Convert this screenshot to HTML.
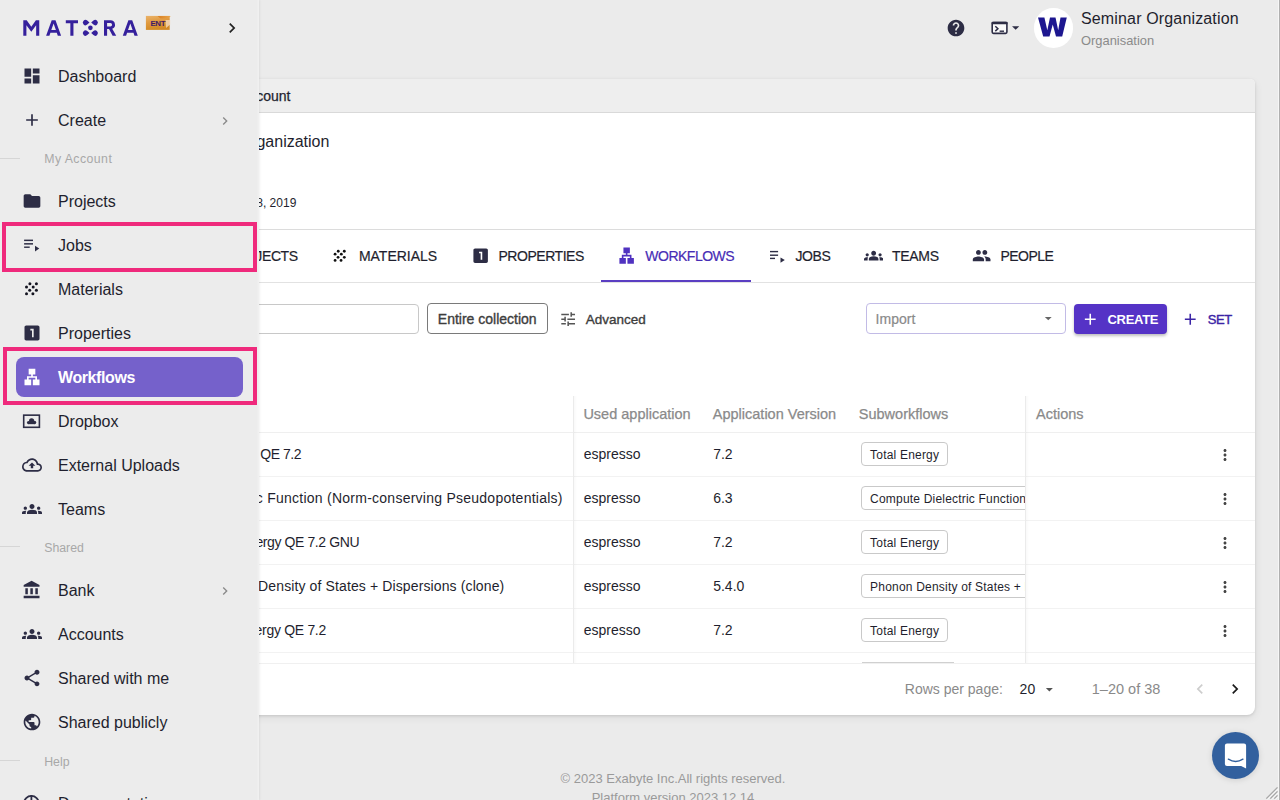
<!DOCTYPE html>
<html><head><meta charset="utf-8"><style>
html,body{margin:0;padding:0;}
body{width:1280px;height:800px;overflow:hidden;position:relative;background:#ebebeb;font-family:"Liberation Sans", sans-serif;-webkit-font-smoothing:antialiased;}
.t{position:absolute;line-height:1;white-space:nowrap;font-family:"Liberation Sans", sans-serif;}
svg{display:block;}
</style></head><body>
<div style="position:absolute;left:1278px;top:0px;width:1px;height:800px;background:#f6f6f6;"></div>
<div style="position:absolute;left:1279px;top:0px;width:1px;height:800px;background:#b0b0b0;"></div>
<svg style="position:absolute;left:945.50px;top:17.75px;" width="20" height="20" viewBox="0 0 24 24"><path fill="#2d2d45" d="M12 2C6.48 2 2 6.48 2 12s4.48 10 10 10 10-4.48 10-10S17.52 2 12 2zm1 17h-2v-2h2v2zm2.07-7.75l-.9.92C13.45 12.9 13 13.5 13 15h-2v-.5c0-1.1.45-2.1 1.17-2.83l1.24-1.26c.37-.36.59-.86.59-1.41 0-1.1-.9-2-2-2s-2 .9-2 2H8c0-2.21 1.79-4 4-4s4 1.79 4 4c0 .88-.36 1.68-.93 2.25z"/></svg>
<svg style="position:absolute;left:0;top:0;" width="1280" height="800" viewBox="0 0 1280 800"><rect x="992.2" y="22.5" width="14.7" height="10.9" rx="1.3" fill="#fafafa" stroke="#2d2d45" stroke-width="1.6"/><rect x="991.5" y="21.7" width="16.2" height="2.6" rx="1" fill="#2d2d45"/><path d="M995.3 26.3L997.9 28.7L995.3 31.1" fill="none" stroke="#2d2d45" stroke-width="1.5"/><rect x="999.6" y="30.5" width="4.4" height="1.4" fill="#2d2d45"/></svg>
<svg style="position:absolute;left:1006.50px;top:19.05px;" width="17.3" height="17.3" viewBox="0 0 24 24"><path fill="#2d2d45" d="M7 10l5 5 5-5z"/></svg>
<div style="position:absolute;left:1033.7px;top:8.4px;width:39.4px;height:39.4px;border-radius:50%;background:#fff;"></div>
<svg style="position:absolute;left:0;top:0;" width="1280" height="800" viewBox="0 0 1280 800"><path d="M1038 17.4H1044.4L1047.3 30.2L1050 17.4H1055.5L1058.2 30.2L1060.5 17.4H1066.8L1062.2 36.5H1056L1052.75 24.6L1049.5 36.5H1043.2Z" fill="#1d1790"/></svg>
<div class="t" style="left:1081.00px;top:11.00px;font-size:16px;color:#1f1f2e;font-weight:400;letter-spacing:0.15px;">Seminar Organization</div>
<div class="t" style="left:1081.00px;top:35.00px;font-size:12.9px;color:#8a8a8a;font-weight:400;">Organisation</div>
<div style="position:absolute;left:90px;top:79px;width:1165px;height:636px;background:#fff;border-radius:5px 5px 8px 8px;box-shadow:0 1px 3px rgba(0,0,0,0.12),1px 3px 8px rgba(0,0,0,0.06);overflow:hidden;">
<div style="position:absolute;left:0;top:0;width:100%;height:33px;background:#eeeeee;border-bottom:1px solid #d9d9d9;"></div>
</div>
<div class="t" style="right:989.50px;top:89.00px;font-size:14px;color:#1f1f2e;font-weight:400;-webkit-text-stroke:0.25px #1f1f2e;">My Account</div>
<div class="t" style="right:950.60px;top:134.00px;font-size:16px;color:#1f1f2e;font-weight:400;">Seminar Organization</div>
<div class="t" style="right:983.70px;top:197.00px;font-size:12px;color:#1f1f2e;font-weight:400;">Created: Feb 28, 2019</div>
<div style="position:absolute;left:90px;top:229px;width:1165px;height:1px;background:#dcdcdc;"></div>
<div style="position:absolute;left:90px;top:282px;width:1165px;height:1px;background:#e2e2e2;"></div>
<div class="t" style="right:982.30px;top:249.00px;font-size:14px;color:#1f1f2e;font-weight:400;letter-spacing:-0.4px;-webkit-text-stroke:0.2px;">PROJECTS</div>
<svg style="position:absolute;left:0;top:0;" width="1280" height="800" viewBox="0 0 1280 800"><circle cx="338.26" cy="251.25" r="1.40" fill="#111"/><circle cx="344.30" cy="251.25" r="1.40" fill="#111"/><circle cx="335.10" cy="254.22" r="1.40" fill="#111"/><circle cx="341.33" cy="254.22" r="1.40" fill="#111"/><circle cx="338.07" cy="257.29" r="1.40" fill="#111"/><circle cx="344.30" cy="257.29" r="1.40" fill="#111"/><circle cx="335.10" cy="260.45" r="1.40" fill="#111"/><circle cx="341.05" cy="260.45" r="1.40" fill="#111"/></svg>
<div class="t" style="left:358.90px;top:249.00px;font-size:14px;color:#1f1f2e;font-weight:400;letter-spacing:0px;-webkit-text-stroke:0.2px;">MATERIALS</div>
<svg style="position:absolute;left:470.60px;top:246.10px;" width="19.3" height="19.3" viewBox="0 0 24 24"><path fill="#2d2d45" d="M19 3H5c-1.1 0-2 .9-2 2v14c0 1.1.9 2 2 2h14c1.1 0 2-.9 2-2V5c0-1.1-.9-2-2-2zm-5 14h-2V9h-2V7h4v10z"/></svg>
<div class="t" style="left:498.40px;top:249.00px;font-size:14px;color:#1f1f2e;font-weight:400;letter-spacing:-0.45px;-webkit-text-stroke:0.2px;">PROPERTIES</div>
<svg style="position:absolute;left:617.40px;top:246.30px;" width="19.3" height="19.3" viewBox="0 0 24 24"><path fill="#5032c0" d="M13 22h8v-7h-3v-4h-5V9h3V2H8v7h3v2H6v4H3v7h8v-7H8v-2h8v2h-3z"/></svg>
<div class="t" style="left:645.30px;top:249.00px;font-size:14px;color:#472db5;font-weight:400;letter-spacing:-0.5px;-webkit-text-stroke:0.2px;">WORKFLOWS</div>
<div style="position:absolute;left:601px;top:280px;width:150px;height:2px;background:#5a3ec2;"></div>
<svg style="position:absolute;left:0;top:0;" width="1280" height="800" viewBox="0 0 1280 800"><g fill="#2d2d45"><rect x="770" y="250.9" width="8.1" height="1.4"/><rect x="770" y="254.5" width="8.1" height="1.4"/><rect x="770" y="257.7" width="5" height="1.4"/><path d="M780.5 257.4v5.3l4.3-2.65z"/></g></svg>
<div class="t" style="left:795.50px;top:249.00px;font-size:14px;color:#1f1f2e;font-weight:400;letter-spacing:-0.4px;-webkit-text-stroke:0.2px;">JOBS</div>
<svg style="position:absolute;left:863.70px;top:246.20px;" width="19.3" height="19.3" viewBox="0 0 24 24"><path fill="#2d2d45" d="M12 12.75c1.63 0 3.07.39 4.24.9 1.08.48 1.76 1.56 1.76 2.73V18H6v-1.61c0-1.18.68-2.26 1.76-2.73 1.17-.52 2.61-.91 4.24-.91zM4 13c1.1 0 2-.9 2-2s-.9-2-2-2-2 .9-2 2 .9 2 2 2zm1.13 1.1c-.37-.06-.74-.1-1.13-.1-.99 0-1.93.21-2.78.58C.48 14.9 0 15.62 0 16.43V18h4.5v-1.61c0-.83.23-1.61.63-2.29zM20 13c1.1 0 2-.9 2-2s-.9-2-2-2-2 .9-2 2 .9 2 2 2zm4 3.43c0-.81-.48-1.53-1.22-1.85-.85-.37-1.79-.58-2.78-.58-.39 0-.76.04-1.13.1.4.68.63 1.46.63 2.29V18H24v-1.57zM12 6c1.66 0 3 1.34 3 3s-1.34 3-3 3-3-1.34-3-3 1.34-3 3-3z"/></svg>
<div class="t" style="left:892.00px;top:249.00px;font-size:14px;color:#1f1f2e;font-weight:400;letter-spacing:-0.3px;-webkit-text-stroke:0.2px;">TEAMS</div>
<svg style="position:absolute;left:972.00px;top:246.20px;" width="19.3" height="19.3" viewBox="0 0 24 24"><path fill="#2d2d45" d="M16 11c1.66 0 2.99-1.34 2.99-3S17.66 5 16 5c-1.66 0-3 1.34-3 3s1.34 3 3 3zm-8 0c1.66 0 2.99-1.34 2.99-3S9.66 5 8 5C6.34 5 5 6.34 5 8s1.34 3 3 3zm0 2c-2.33 0-7 1.17-7 3.5V19h14v-2.5c0-2.33-4.67-3.5-7-3.5zm8 0c-.29 0-.62.02-.97.05 1.16.84 1.97 1.97 1.97 3.45V19h6v-2.5c0-2.33-4.67-3.5-7-3.5z"/></svg>
<div class="t" style="left:1000.50px;top:249.00px;font-size:14px;color:#1f1f2e;font-weight:400;letter-spacing:-0.55px;-webkit-text-stroke:0.2px;">PEOPLE</div>
<div style="position:absolute;left:150px;top:304.4px;width:268.6px;height:29.6px;box-sizing:border-box;border:1px solid #c8c8c8;border-radius:4px;background:#fff;"></div>
<div style="position:absolute;left:427.1px;top:303.4px;width:121px;height:31px;box-sizing:border-box;border:1px solid #7a7a7a;border-radius:4px;"></div>
<div class="t" style="left:437.80px;top:312.00px;font-size:14px;color:#3d3d3d;font-weight:400;-webkit-text-stroke:0.35px #3d3d3d;">Entire collection</div>
<svg style="position:absolute;left:558.70px;top:309.80px;" width="18.3" height="18.3" viewBox="0 0 24 24"><path fill="#555" d="M3 17v2h6v-2H3zM3 5v2h10V5H3zm10 16v-2h8v-2h-8v-2h-2v6h2zM7 9v2H3v2h4v2h2V9H7zm14 4v-2H11v2h10zm-6-4h2V7h4V5h-4V3h-2v6z"/></svg>
<div class="t" style="left:585.70px;top:313.00px;font-size:13.5px;color:#3d3d3d;font-weight:400;-webkit-text-stroke:0.35px #3d3d3d;">Advanced</div>
<div style="position:absolute;left:865.5px;top:303.4px;width:200.2px;height:31px;box-sizing:border-box;border:1.3px solid #c2bbe6;border-radius:4px;"></div>
<div class="t" style="left:875.60px;top:312.00px;font-size:14px;color:#8a8a8a;font-weight:400;-webkit-text-stroke:0.2px;">Import</div>
<svg style="position:absolute;left:1040.10px;top:310.40px;" width="16.5" height="16.5" viewBox="0 0 24 24"><path fill="#666" d="M7 10l5 5 5-5z"/></svg>
<div style="position:absolute;left:1074px;top:304px;width:93px;height:29.5px;background:#5533c6;border-radius:4px;box-shadow:0 2px 3px rgba(0,0,0,0.25);"></div>
<svg style="position:absolute;left:1081.00px;top:310.20px;" width="18.5" height="18.5" viewBox="0 0 24 24"><path fill="#fff" d="M19 13h-6v6h-2v-6H5v-2h6V5h2v6h6v2z"/></svg>
<div class="t" style="left:1107.50px;top:313.00px;font-size:13px;color:#fff;font-weight:700;letter-spacing:-0.3px;">CREATE</div>
<svg style="position:absolute;left:1181.20px;top:309.90px;" width="18.5" height="18.5" viewBox="0 0 24 24"><path fill="#3b24a6" d="M19 13h-6v6h-2v-6H5v-2h6V5h2v6h6v2z"/></svg>
<div class="t" style="left:1207.80px;top:313.00px;font-size:13px;color:#3b24a6;font-weight:400;letter-spacing:-0.45px;-webkit-text-stroke:0.4px #3b24a6;">SET</div>
<div class="t" style="left:583.40px;top:407.00px;font-size:14.5px;color:#8a8a8a;font-weight:400;-webkit-text-stroke:0.25px;">Used application</div>
<div class="t" style="left:712.80px;top:407.00px;font-size:14.5px;color:#8a8a8a;font-weight:400;-webkit-text-stroke:0.25px;">Application Version</div>
<div class="t" style="left:858.80px;top:407.00px;font-size:14.5px;color:#8a8a8a;font-weight:400;-webkit-text-stroke:0.25px;">Subworkflows</div>
<div class="t" style="left:1036.00px;top:407.00px;font-size:14.5px;color:#8a8a8a;font-weight:400;-webkit-text-stroke:0.25px;">Actions</div>
<div style="position:absolute;left:90px;top:432px;width:1165px;height:1px;background:#efefef;"></div>
<div class="t" style="right:978.85px;top:447.00px;font-size:14px;color:#1f1f2e;font-weight:400;letter-spacing:-0.45px;">Band Gap HSE QE 7.2</div>
<div class="t" style="left:583.70px;top:447.00px;font-size:14px;color:#1f1f2e;font-weight:400;">espresso</div>
<div class="t" style="left:713.20px;top:447.00px;font-size:14px;color:#1f1f2e;font-weight:400;">7.2</div>
<div style="position:absolute;left:861.1px;top:442.3px;height:23.8px;box-sizing:border-box;border:1px solid #c9c9c9;border-radius:4px;padding:0 8px;"><div class="t" style="position:static;font-size:12px;line-height:21.8px;padding-top:2px;height:19.8px;letter-spacing:0.2px;color:#1f1f2e;">Total Energy</div></div>
<div style="position:absolute;left:90px;top:476px;width:1165px;height:1px;background:#f2f2f2;"></div>
<div class="t" style="right:717.25px;top:491.00px;font-size:14px;color:#1f1f2e;font-weight:400;letter-spacing:0.25px;">Compute Dielectric Function (Norm-conserving Pseudopotentials)</div>
<div class="t" style="left:583.70px;top:491.00px;font-size:14px;color:#1f1f2e;font-weight:400;">espresso</div>
<div class="t" style="left:713.20px;top:491.00px;font-size:14px;color:#1f1f2e;font-weight:400;">6.3</div>
<div style="position:absolute;left:861.1px;top:486.3px;height:23.8px;box-sizing:border-box;border:1px solid #c9c9c9;border-radius:4px;padding:0 8px;"><div class="t" style="position:static;font-size:12px;line-height:21.8px;padding-top:2px;height:19.8px;letter-spacing:0.2px;color:#1f1f2e;">Compute Dielectric Function</div></div>
<div style="position:absolute;left:90px;top:520px;width:1165px;height:1px;background:#f2f2f2;"></div>
<div class="t" style="right:920.90px;top:535.00px;font-size:14px;color:#1f1f2e;font-weight:400;letter-spacing:-0.4px;">Total Energy QE 7.2 GNU</div>
<div class="t" style="left:583.70px;top:535.00px;font-size:14px;color:#1f1f2e;font-weight:400;">espresso</div>
<div class="t" style="left:713.20px;top:535.00px;font-size:14px;color:#1f1f2e;font-weight:400;">7.2</div>
<div style="position:absolute;left:861.1px;top:530.3px;height:23.8px;box-sizing:border-box;border:1px solid #c9c9c9;border-radius:4px;padding:0 8px;"><div class="t" style="position:static;font-size:12px;line-height:21.8px;padding-top:2px;height:19.8px;letter-spacing:0.2px;color:#1f1f2e;">Total Energy</div></div>
<div style="position:absolute;left:90px;top:564px;width:1165px;height:1px;background:#f2f2f2;"></div>
<div class="t" style="right:775.63px;top:579.00px;font-size:14px;color:#1f1f2e;font-weight:400;letter-spacing:0.12px;">Phonon Density of States + Dispersions (clone)</div>
<div class="t" style="left:583.70px;top:579.00px;font-size:14px;color:#1f1f2e;font-weight:400;">espresso</div>
<div class="t" style="left:713.20px;top:579.00px;font-size:14px;color:#1f1f2e;font-weight:400;">5.4.0</div>
<div style="position:absolute;left:861.1px;top:574.3px;height:23.8px;box-sizing:border-box;border:1px solid #c9c9c9;border-radius:4px;padding:0 8px;"><div class="t" style="position:static;font-size:12px;line-height:21.8px;padding-top:2px;height:19.8px;letter-spacing:0.2px;color:#1f1f2e;">Phonon Density of States + Dispersions</div></div>
<div style="position:absolute;left:90px;top:608px;width:1165px;height:1px;background:#f2f2f2;"></div>
<div class="t" style="right:954.05px;top:623.00px;font-size:14px;color:#1f1f2e;font-weight:400;letter-spacing:-0.3px;">Total Energy QE 7.2</div>
<div class="t" style="left:583.70px;top:623.00px;font-size:14px;color:#1f1f2e;font-weight:400;">espresso</div>
<div class="t" style="left:713.20px;top:623.00px;font-size:14px;color:#1f1f2e;font-weight:400;">7.2</div>
<div style="position:absolute;left:861.1px;top:618.3px;height:23.8px;box-sizing:border-box;border:1px solid #c9c9c9;border-radius:4px;padding:0 8px;"><div class="t" style="position:static;font-size:12px;line-height:21.8px;padding-top:2px;height:19.8px;letter-spacing:0.2px;color:#1f1f2e;">Total Energy</div></div>
<div style="position:absolute;left:90px;top:652px;width:1165px;height:1px;background:#f2f2f2;"></div>
<div style="position:absolute;left:861.5px;top:662px;width:92px;height:1px;background:#d0d0d0;"></div>
<div style="position:absolute;left:1026px;top:433px;width:150px;height:230px;background:#fff;"></div>
<svg style="position:absolute;left:1215.50px;top:445.50px;" width="18" height="18" viewBox="0 0 24 24"><path fill="#444" d="M12 8c1.1 0 2-.9 2-2s-.9-2-2-2-2 .9-2 2 .9 2 2 2zm0 2c-1.1 0-2 .9-2 2s.9 2 2 2 2-.9 2-2-.9-2-2-2zm0 6c-1.1 0-2 .9-2 2s.9 2 2 2 2-.9 2-2-.9-2-2-2z"/></svg>
<div style="position:absolute;left:1026px;top:476px;width:229px;height:1px;background:#f2f2f2;"></div>
<svg style="position:absolute;left:1215.50px;top:489.50px;" width="18" height="18" viewBox="0 0 24 24"><path fill="#444" d="M12 8c1.1 0 2-.9 2-2s-.9-2-2-2-2 .9-2 2 .9 2 2 2zm0 2c-1.1 0-2 .9-2 2s.9 2 2 2 2-.9 2-2-.9-2-2-2zm0 6c-1.1 0-2 .9-2 2s.9 2 2 2 2-.9 2-2-.9-2-2-2z"/></svg>
<div style="position:absolute;left:1026px;top:520px;width:229px;height:1px;background:#f2f2f2;"></div>
<svg style="position:absolute;left:1215.50px;top:533.50px;" width="18" height="18" viewBox="0 0 24 24"><path fill="#444" d="M12 8c1.1 0 2-.9 2-2s-.9-2-2-2-2 .9-2 2 .9 2 2 2zm0 2c-1.1 0-2 .9-2 2s.9 2 2 2 2-.9 2-2-.9-2-2-2zm0 6c-1.1 0-2 .9-2 2s.9 2 2 2 2-.9 2-2-.9-2-2-2z"/></svg>
<div style="position:absolute;left:1026px;top:564px;width:229px;height:1px;background:#f2f2f2;"></div>
<svg style="position:absolute;left:1215.50px;top:577.50px;" width="18" height="18" viewBox="0 0 24 24"><path fill="#444" d="M12 8c1.1 0 2-.9 2-2s-.9-2-2-2-2 .9-2 2 .9 2 2 2zm0 2c-1.1 0-2 .9-2 2s.9 2 2 2 2-.9 2-2-.9-2-2-2zm0 6c-1.1 0-2 .9-2 2s.9 2 2 2 2-.9 2-2-.9-2-2-2z"/></svg>
<div style="position:absolute;left:1026px;top:608px;width:229px;height:1px;background:#f2f2f2;"></div>
<svg style="position:absolute;left:1215.50px;top:621.50px;" width="18" height="18" viewBox="0 0 24 24"><path fill="#444" d="M12 8c1.1 0 2-.9 2-2s-.9-2-2-2-2 .9-2 2 .9 2 2 2zm0 2c-1.1 0-2 .9-2 2s.9 2 2 2 2-.9 2-2-.9-2-2-2zm0 6c-1.1 0-2 .9-2 2s.9 2 2 2 2-.9 2-2-.9-2-2-2z"/></svg>
<div style="position:absolute;left:1026px;top:652px;width:229px;height:1px;background:#f2f2f2;"></div>
<div style="position:absolute;left:573px;top:395.5px;width:1px;height:268px;background:#ebebeb;"></div>
<div style="position:absolute;left:574px;top:395.5px;width:3px;height:268px;background:linear-gradient(to right, rgba(0,0,0,0.025), rgba(0,0,0,0));"></div>
<div style="position:absolute;left:1024.5px;top:395.5px;width:1px;height:268px;background:#ebebeb;"></div>
<div style="position:absolute;left:1025.5px;top:395.5px;width:3px;height:268px;background:linear-gradient(to right, rgba(0,0,0,0.025), rgba(0,0,0,0));"></div>
<div style="position:absolute;left:90px;top:663px;width:1165px;height:1px;background:#f0f0f0;"></div>
<div class="t" style="left:904.80px;top:682.00px;font-size:14px;color:#8a8a8a;font-weight:400;">Rows per page:</div>
<div class="t" style="left:1019.60px;top:682.00px;font-size:14px;color:#1f1f2e;font-weight:400;">20</div>
<svg style="position:absolute;left:1040.60px;top:680.90px;" width="16.8" height="16.8" viewBox="0 0 24 24"><path fill="#555" d="M7 10l5 5 5-5z"/></svg>
<div class="t" style="left:1091.80px;top:682.00px;font-size:14.5px;color:#8a8a8a;font-weight:400;">1–20 of 38</div>
<svg style="position:absolute;left:1189.80px;top:679.40px;" width="20" height="20" viewBox="0 0 24 24"><path fill="#cdcdcd" d="M15.41 7.41L14 6l-6 6 6 6 1.41-1.41L10.83 12z"/></svg>
<svg style="position:absolute;left:1225.30px;top:679.40px;" width="20" height="20" viewBox="0 0 24 24"><path fill="#1a1a1a" d="M10 6L8.59 7.41 13.17 12l-4.58 4.59L10 18l6-6z"/></svg>
<div class="t" style="left:473px;width:400px;text-align:center;top:772.00px;font-size:13px;color:#9a9a9a;">© 2023 Exabyte Inc.All rights reserved.</div>
<div class="t" style="left:473px;width:400px;text-align:center;top:790.50px;font-size:13px;color:#9a9a9a;">Platform version 2023.12.14</div>
<div style="position:absolute;left:1212px;top:732px;width:47px;height:47px;border-radius:50%;background:#32609e;box-shadow:0 1px 6px rgba(0,0,0,0.12);"></div>
<svg style="position:absolute;left:0;top:0;" width="1280" height="800" viewBox="0 0 1280 800"><path d="M1227 743.4h17a2.1 2.1 0 0 1 2.1 2.1v23l-5-2.5h-14.1a2.1 2.1 0 0 1-2.1-2.1v-18.4a2.1 2.1 0 0 1 2.1-2.1z" fill="#fff"/><path d="M1228.4 759.2q7.25 4.6 14.5 0" stroke="#32609e" stroke-width="1.4" fill="none" stroke-linecap="round"/></svg>
<svg style="position:absolute;left:0;top:0;" width="1280" height="800" viewBox="0 0 1280 800"><path d="M1267.3 799.6L1278.3 788.6M1271.3 799.6L1278.3 792.6M1275.3 799.6L1278.3 796.6" stroke="#fafafa" stroke-width="1"/><path d="M1266.3 798.6L1277.5 787.4M1270.3 798.6L1277.5 791.4M1274.3 798.6L1277.5 795.4" stroke="#a6a6a6" stroke-width="1.3"/></svg>
<div style="position:absolute;left:0;top:0;width:259.3px;height:800px;background:#ececec;box-shadow:inset -1.5px 0 0 #f0f0f0, 1px 0 2px rgba(0,0,0,0.06);"></div>
<svg style="position:absolute;left:0;top:0;" width="1280" height="800" viewBox="0 0 1280 800"><g fill="#35209c" fill-rule="evenodd">
<path d="M23.3 35.75V20.3H26.7L31.3 26.7L35.9 20.3H39.25V35.75H36.15V25.3L31.3 31.8L26.4 25.3V35.75Z"/>
<path d="M46.1 35.75L51.7 20.3H55.5L61.1 35.75H57.8L56.8 32.8H50.4L49.4 35.75ZM51.3 30.1H55.9L53.6 23.6Z"/>
<path d="M65.8 20.3H78V23.2H73.45V35.75H70.35V23.2H65.8Z"/>
<path d="M104 35.75V20.3H110.6A4.4 4.4 0 0 1 112.2 28.8L116.2 35.75H112.6L109 29.1H107.1V35.75ZM107.1 23.1V26.4H110.4A1.65 1.65 0 0 0 110.4 23.1Z"/>
<path d="M122.8 35.75L128.4 20.3H132.2L137.8 35.75H134.5L133.5 32.8H127.1L126.1 35.75ZM128 30.1H132.6L130.3 23.6Z"/>
</g>
<g fill="#35209c">
<circle cx="90.4" cy="27.85" r="2.3"/>
<path d="M89.50 22.60L87.26 20.61A2.65 2.65 0 1 0 87.26 24.59ZM91.20 22.60L93.44 20.61A2.65 2.65 0 1 1 93.44 24.59ZM89.50 33.10L87.26 31.11A2.65 2.65 0 1 0 87.26 35.09ZM91.20 33.10L93.44 31.11A2.65 2.65 0 1 1 93.44 35.09Z"/>
</g>
<defs><linearGradient id="ent" x1="0" y1="0" x2="0.3" y2="1"><stop offset="0" stop-color="#eab36a"/><stop offset="0.5" stop-color="#e0993e"/><stop offset="1" stop-color="#d28a25"/></linearGradient>
<linearGradient id="ent2" x1="0" y1="0" x2="1" y2="0"><stop offset="0" stop-color="#d97f22"/><stop offset="1" stop-color="#e9a54a"/></linearGradient></defs>
<rect x="145.9" y="15.9" width="23.8" height="14" fill="url(#ent)"/>
<path d="M157.5 15.9H170.8L167.5 18.5H160.5Z" fill="url(#ent2)"/>
<path d="M165.5 20H170.2V24.5L166 28Z" fill="#f3dcc0" opacity="0.8"/>
<text x="150.4" y="25.7" font-family="Liberation Sans" font-weight="700" font-size="7.9" fill="#3f1a66" letter-spacing="-0.35">ENT</text></svg>
<svg style="position:absolute;left:222.30px;top:18.00px;" width="20" height="20" viewBox="0 0 24 24"><path fill="#222" d="M10 6L8.59 7.41 13.17 12l-4.58 4.59L10 18l6-6z"/></svg>
<div style="position:absolute;left:15.7px;top:357px;width:227.3px;height:39.5px;background:#7561cb;border-radius:8px;"></div>
<div class="t" style="left:58.00px;top:69.00px;font-size:16px;color:#1f1f2e;font-weight:400;">Dashboard</div>
<svg style="position:absolute;left:21.50px;top:66.10px;" width="20" height="20" viewBox="0 0 24 24"><path fill="#2d2d45" d="M3 13h8V3H3v10zm0 8h8v-6H3v6zm10 0h8V11h-8v10zm0-18v6h8V3h-8z"/></svg>
<div class="t" style="left:58.00px;top:113.00px;font-size:16px;color:#1f1f2e;font-weight:400;">Create</div>
<svg style="position:absolute;left:21.50px;top:110.10px;" width="20" height="20" viewBox="0 0 24 24"><path fill="#2d2d45" d="M19 13h-6v6h-2v-6H5v-2h6V5h2v6h6v2z"/></svg>
<div style="position:absolute;left:0px;top:157.7px;width:19.5px;height:1px;background:#d6d6d6;"></div>
<div class="t" style="left:44.20px;top:153.00px;font-size:12.3px;color:#a8a8a8;font-weight:400;letter-spacing:0.45px;">My Account</div>
<div class="t" style="left:58.00px;top:194.00px;font-size:16px;color:#1f1f2e;font-weight:400;">Projects</div>
<svg style="position:absolute;left:21.50px;top:191.10px;" width="20" height="20" viewBox="0 0 24 24"><path fill="#2d2d45" d="M10 4H4c-1.1 0-1.99.9-1.99 2L2 18c0 1.1.9 2 2 2h16c1.1 0 2-.9 2-2V8c0-1.1-.9-2-2-2h-8l-2-2z"/></svg>
<div class="t" style="left:58.00px;top:238.00px;font-size:16px;color:#1f1f2e;font-weight:400;">Jobs</div>
<svg style="position:absolute;left:0;top:0;" width="1280" height="800" viewBox="0 0 1280 800"><g fill="#2d2d45"><rect x="24.1" y="239.6" width="8.9" height="1.5"/><rect x="24.1" y="243.1" width="8.9" height="1.5"/><rect x="24.1" y="246.5" width="5.6" height="1.4"/><path d="M35 245.7v5.8l4.3-2.9z"/></g></svg>
<div class="t" style="left:58.00px;top:282.00px;font-size:16px;color:#1f1f2e;font-weight:400;">Materials</div>
<svg style="position:absolute;left:0;top:0;" width="1280" height="800" viewBox="0 0 1280 800"><circle cx="29.90" cy="283.80" r="1.50" fill="#141420"/><circle cx="36.40" cy="283.80" r="1.50" fill="#141420"/><circle cx="26.50" cy="287.00" r="1.50" fill="#141420"/><circle cx="33.20" cy="287.00" r="1.50" fill="#141420"/><circle cx="29.70" cy="290.30" r="1.50" fill="#141420"/><circle cx="36.40" cy="290.30" r="1.50" fill="#141420"/><circle cx="26.50" cy="293.70" r="1.50" fill="#141420"/><circle cx="32.90" cy="293.70" r="1.50" fill="#141420"/></svg>
<div class="t" style="left:58.00px;top:326.00px;font-size:16px;color:#1f1f2e;font-weight:400;">Properties</div>
<svg style="position:absolute;left:21.50px;top:323.10px;" width="20" height="20" viewBox="0 0 24 24"><path fill="#2d2d45" d="M19 3H5c-1.1 0-2 .9-2 2v14c0 1.1.9 2 2 2h14c1.1 0 2-.9 2-2V5c0-1.1-.9-2-2-2zm-5 14h-2V9h-2V7h4v10z"/></svg>
<div class="t" style="left:58.00px;top:370.00px;font-size:16px;color:#fff;font-weight:700;letter-spacing:-0.4px;">Workflows</div>
<svg style="position:absolute;left:21.50px;top:367.10px;" width="20" height="20" viewBox="0 0 24 24"><path fill="#fff" d="M13 22h8v-7h-3v-4h-5V9h3V2H8v7h3v2H6v4H3v7h8v-7H8v-2h8v2h-3z"/></svg>
<div class="t" style="left:58.00px;top:414.00px;font-size:16px;color:#1f1f2e;font-weight:400;">Dropbox</div>
<svg style="position:absolute;left:0;top:0;" width="1280" height="800" viewBox="0 0 1280 800"><rect x="23.7" y="415.15" width="15.7" height="12.15" fill="none" stroke="#2d2d45" stroke-width="1.6"/><g fill="#2d2d45"><circle cx="28.5" cy="422.6" r="1.55"/><circle cx="31.6" cy="420.9" r="2.6"/><circle cx="34.6" cy="422.5" r="1.65"/><rect x="28.5" y="422" width="6.1" height="2.15"/></g></svg>
<div class="t" style="left:58.00px;top:458.00px;font-size:16px;color:#1f1f2e;font-weight:400;">External Uploads</div>
<svg style="position:absolute;left:21.50px;top:455.10px;" width="20" height="20" viewBox="0 0 24 24"><path fill="#2d2d45" d="M19.35 10.04C18.67 6.59 15.64 4 12 4 9.11 4 6.6 5.64 5.35 8.04 2.34 8.36 0 10.91 0 14c0 3.31 2.69 6 6 6h13c2.76 0 5-2.24 5-5 0-2.64-2.05-4.78-4.65-4.96zM19 18H6c-2.21 0-4-1.79-4-4 0-2.05 1.53-3.76 3.56-3.97l1.07-.11.5-.95C8.08 7.14 9.94 6 12 6c2.62 0 4.88 1.86 5.39 4.43l.3 1.5 1.53.11c1.56.1 2.78 1.41 2.78 2.96 0 1.65-1.35 3-3 3zM8 13h2.55v3h2.9v-3H16l-4-4z"/></svg>
<div class="t" style="left:58.00px;top:502.00px;font-size:16px;color:#1f1f2e;font-weight:400;">Teams</div>
<svg style="position:absolute;left:21.50px;top:499.10px;" width="20" height="20" viewBox="0 0 24 24"><path fill="#2d2d45" d="M12 12.75c1.63 0 3.07.39 4.24.9 1.08.48 1.76 1.56 1.76 2.73V18H6v-1.61c0-1.18.68-2.26 1.76-2.73 1.17-.52 2.61-.91 4.24-.91zM4 13c1.1 0 2-.9 2-2s-.9-2-2-2-2 .9-2 2 .9 2 2 2zm1.13 1.1c-.37-.06-.74-.1-1.13-.1-.99 0-1.93.21-2.78.58C.48 14.9 0 15.62 0 16.43V18h4.5v-1.61c0-.83.23-1.61.63-2.29zM20 13c1.1 0 2-.9 2-2s-.9-2-2-2-2 .9-2 2 .9 2 2 2zm4 3.43c0-.81-.48-1.53-1.22-1.85-.85-.37-1.79-.58-2.78-.58-.39 0-.76.04-1.13.1.4.68.63 1.46.63 2.29V18H24v-1.57zM12 6c1.66 0 3 1.34 3 3s-1.34 3-3 3-3-1.34-3-3 1.34-3 3-3z"/></svg>
<div style="position:absolute;left:0px;top:546.1px;width:19.5px;height:1px;background:#d6d6d6;"></div>
<div class="t" style="left:44.20px;top:542.00px;font-size:12.3px;color:#a8a8a8;font-weight:400;">Shared</div>
<div class="t" style="left:58.00px;top:583.00px;font-size:16px;color:#1f1f2e;font-weight:400;">Bank</div>
<svg style="position:absolute;left:21.50px;top:580.10px;" width="20" height="20" viewBox="0 0 24 24"><path fill="#2d2d45" d="M4 10v7h3v-7H4zm6 0v7h3v-7h-3zM2 22h19v-3H2v3zm14-12v7h3v-7h-3zm-4.5-9L2 6v2h19V6l-9.5-5z"/></svg>
<div class="t" style="left:58.00px;top:627.00px;font-size:16px;color:#1f1f2e;font-weight:400;">Accounts</div>
<svg style="position:absolute;left:21.50px;top:624.10px;" width="20" height="20" viewBox="0 0 24 24"><path fill="#2d2d45" d="M12 12.75c1.63 0 3.07.39 4.24.9 1.08.48 1.76 1.56 1.76 2.73V18H6v-1.61c0-1.18.68-2.26 1.76-2.73 1.17-.52 2.61-.91 4.24-.91zM4 13c1.1 0 2-.9 2-2s-.9-2-2-2-2 .9-2 2 .9 2 2 2zm1.13 1.1c-.37-.06-.74-.1-1.13-.1-.99 0-1.93.21-2.78.58C.48 14.9 0 15.62 0 16.43V18h4.5v-1.61c0-.83.23-1.61.63-2.29zM20 13c1.1 0 2-.9 2-2s-.9-2-2-2-2 .9-2 2 .9 2 2 2zm4 3.43c0-.81-.48-1.53-1.22-1.85-.85-.37-1.79-.58-2.78-.58-.39 0-.76.04-1.13.1.4.68.63 1.46.63 2.29V18H24v-1.57zM12 6c1.66 0 3 1.34 3 3s-1.34 3-3 3-3-1.34-3-3 1.34-3 3-3z"/></svg>
<div class="t" style="left:58.00px;top:671.00px;font-size:16px;color:#1f1f2e;font-weight:400;">Shared with me</div>
<svg style="position:absolute;left:21.50px;top:668.10px;" width="20" height="20" viewBox="0 0 24 24"><path fill="#2d2d45" d="M18 16.08c-.76 0-1.44.3-1.96.77L8.91 12.7c.05-.23.09-.46.09-.7s-.04-.47-.09-.7l7.05-4.11c.54.5 1.25.81 2.04.81 1.66 0 3-1.34 3-3s-1.34-3-3-3-3 1.34-3 3c0 .24.04.47.09.7L8.04 9.81C7.5 9.31 6.79 9 6 9c-1.66 0-3 1.34-3 3s1.34 3 3 3c.79 0 1.5-.31 2.04-.81l7.12 4.16c-.05.21-.08.43-.08.65 0 1.61 1.31 2.92 2.92 2.92 1.61 0 2.92-1.31 2.92-2.92s-1.31-2.92-2.92-2.92z"/></svg>
<div class="t" style="left:58.00px;top:715.00px;font-size:16px;color:#1f1f2e;font-weight:400;">Shared publicly</div>
<svg style="position:absolute;left:21.50px;top:712.10px;" width="20" height="20" viewBox="0 0 24 24"><path fill="#2d2d45" d="M12 2C6.48 2 2 6.48 2 12s4.48 10 10 10 10-4.48 10-10S17.52 2 12 2zm-1 17.93c-3.95-.49-7-3.85-7-7.93 0-.62.08-1.21.21-1.79L9 15v1c0 1.1.9 2 2 2v1.93zm6.9-2.54c-.26-.81-1-1.39-1.9-1.39h-1v-3c0-.55-.45-1-1-1H8v-2h2c.55 0 1-.45 1-1V7h2c1.1 0 2-.9 2-2v-.41c2.93 1.19 5 4.06 5 7.41 0 2.08-.8 3.97-2.1 5.39z"/></svg>
<div style="position:absolute;left:0px;top:760.4px;width:19.5px;height:1px;background:#d6d6d6;"></div>
<div class="t" style="left:44.20px;top:756.00px;font-size:12.3px;color:#a8a8a8;font-weight:400;">Help</div>
<div class="t" style="left:58.00px;top:796.00px;font-size:16px;color:#1f1f2e;font-weight:400;">Documentation</div>
<svg style="position:absolute;left:0;top:0;" width="1280" height="800" viewBox="0 0 1280 800"><circle cx="31.4" cy="803.3" r="7.4" fill="none" stroke="#2d2d45" stroke-width="1.8"/><rect x="30.5" y="795" width="1.8" height="7" fill="#2d2d45"/></svg>
<svg style="position:absolute;left:216.50px;top:112.80px;" width="16" height="16" viewBox="0 0 24 24"><path fill="#8a8a8a" d="M10 6L8.59 7.41 13.17 12l-4.58 4.59L10 18l6-6z"/></svg>
<svg style="position:absolute;left:216.50px;top:583.00px;" width="16" height="16" viewBox="0 0 24 24"><path fill="#8a8a8a" d="M10 6L8.59 7.41 13.17 12l-4.58 4.59L10 18l6-6z"/></svg>
<div style="position:absolute;left:2.3px;top:222px;width:255.2px;height:49.5px;box-sizing:border-box;border:4px solid #ef2a7c;"></div>
<div style="position:absolute;left:2.5px;top:346.7px;width:254.5px;height:58.6px;box-sizing:border-box;border:4px solid #ef2a7c;"></div>
</body></html>
